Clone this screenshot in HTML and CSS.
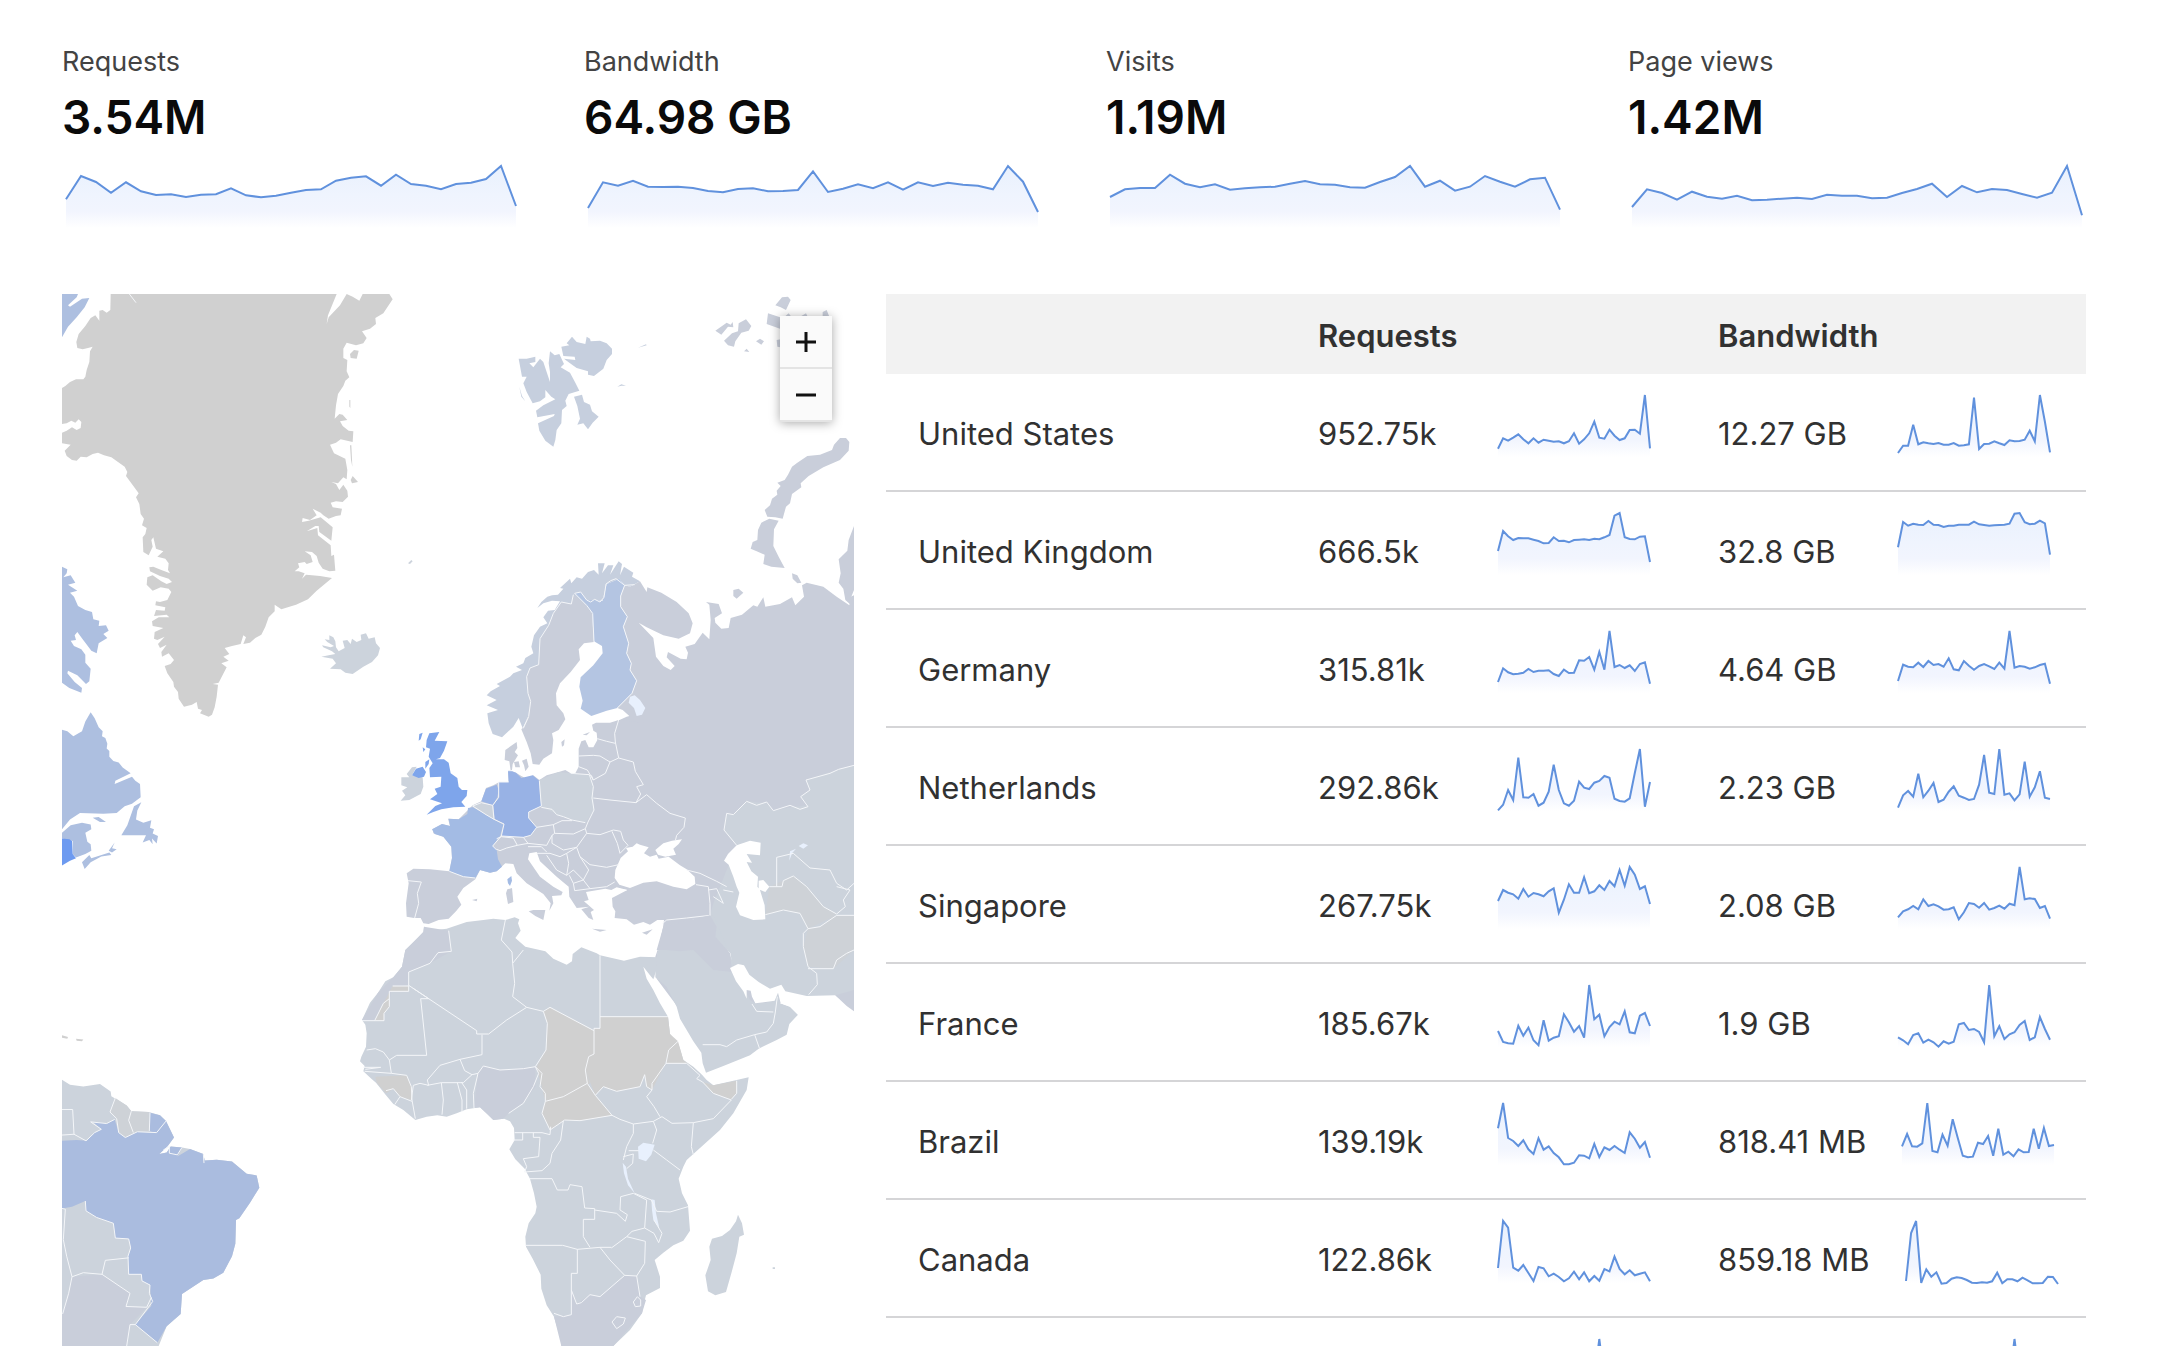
FILE: index.html
```
<!DOCTYPE html>
<html lang="en">
<head>
    <meta charset="UTF-8">
    <meta name="viewport" content="width=device-width, initial-scale=1.0">
    <title>Traffic</title>
    <link rel="stylesheet" href="styles.css">
</head>
<body>
    <main class="dashboard">
        <section class="metrics">
            <div class="metric">
                <h2>Requests</h2>
                <p>3.54M</p>
                <svg class="spark" data-points="100,30,48,80,49,76,87,85,93,86,85,67,88,94,89,80,72,70,44,35,31,59,26,54,59,70,54,50,39,0,120"></svg>
            </div>
            <div class="metric">
                <h2>Bandwidth</h2>
                <p>64.98 GB</p>
                <svg class="spark" data-points="126,49,59,44,62,63,62,66,75,79,69,67,76,75,72,16,78,68,55,67,49,71,49,60,50,56,59,70,0,47,138"></svg>
            </div>
            <div class="metric">
                <h2>Visits</h2>
                <p>1.19M</p>
                <svg class="spark" data-points="93,70,66,66,26,53,64,55,71,67,64,62,53,45,55,56,64,65,48,33,0,62,44,74,62,30,47,62,40,35,131"></svg>
            </div>
            <div class="metric">
                <h2>Page views</h2>
                <p>1.42M</p>
                <svg class="spark" data-points="123,70,81,101,77,92,98,89,103,101,98,95,99,86,89,89,97,95,81,69,53,93,60,79,69,72,84,95,80,0,148"></svg>
            </div>
        </section>

        <section class="traffic">
            <div class="map">
                <svg class="world" viewBox="0 0 2376 3156">
                    <!-- Greenland, Iceland, Arctic Canada -->
                    <g transform="translate(-36 -42)">
                        <path class="none" d="M182 42L181 90 170 98 158 90 148 92 148 122 136 106 122 114 106 138 86 162 79 186 82 204 98 208 114 204 128 200 120 214 118 246 110 270 106 290 100 298 78 298 60 306 46 318 36 324V432L50 430 64 422 76 428 86 418 94 426 92 444 80 450 66 442 50 452 36 458V490L62 494 44 512 50 528 66 540 80 542 92 530 110 532 128 522 144 518 162 526 184 532 204 546 224 560 232 576 228 588 244 610 266 640 258 652 268 672 272 702 282 716 276 736 290 744 286 762 278 772 280 816 296 826 308 800 304 780 310 772 318 806 340 814 322 830 346 836 356 850 354 870 360 880 334 870 310 860 298 862 300 874 330 888 356 896 366 906 350 912 334 904 308 886 292 892 290 914 308 932 332 922 356 926 364 936 352 960 330 966 318 964 316 976 346 982 344 992 318 990 312 1008 350 1004 358 1012 326 1012 306 1024 308 1038 340 1044 314 1056 312 1076 322 1080 344 1070 324 1092 330 1104 350 1094 334 1116 336 1130 356 1120 372 1140 362 1152 344 1158 352 1180 370 1206 372 1220 384 1236 386 1256 402 1280 426 1274 440 1266 444 1286 456 1290 450 1300 476 1310 486 1304 494 1282 500 1250 504 1214 488 1212 506 1208 530 1162 514 1150 536 1142 520 1130 538 1122 524 1104 546 1098 572 1092 580 1066 588 1072 580 1092 600 1088 616 1074 634 1064 646 1040 656 1012 674 994 674 974 694 988 738 974 774 958 800 932 846 894 810 888 786 886 768 884 756 896 764 880 746 874 734 874 748 862 744 850 764 846 770 852 788 846 782 826 764 814 786 816 800 828 806 848 818 866 838 874 856 872 852 824 844 828 842 796 804 766 802 744 770 754 796 738 806 738 808 756 844 782 848 742 812 712 776 722 756 726 758 714 780 720 800 706 788 686 812 698 820 706 836 716 858 708 872 706 876 686 848 682 842 668 858 664 878 666 894 650 892 632 880 614 868 630 858 612 844 606 864 610 880 592 890 598 892 570 886 536 852 520 840 494 858 488 872 478 908 486 910 454 896 452 878 438 870 424 892 420 878 404 868 402 854 416 858 376 864 342 880 318 886 302 898 292 890 274 892 240 880 234 880 206 890 188 918 196 940 190 950 174 936 154 960 146 978 132 976 114 1000 100 1028 58 1018 42H938L928 62 908 50 890 42 870 76 836 112 830 132 834 106 860 42Z"/>
                        <path class="none" d="M900 222L912 210 926 212 920 236 902 234ZM902 600L908 588 924 606 906 610ZM898 360l3 0v24l-3-4ZM900 496l4 0 3 64-4-20Z"/>
                        <path class="border" d="M238 42L258 68"/>
                        <path class="land" d="M814 1130L836 1126 856 1122 846 1114 820 1102 816 1096 842 1102 852 1098 832 1086 824 1078 838 1080 838 1066 850 1072 856 1084 858 1102 866 1114 884 1104 878 1082 892 1080 902 1092 906 1076 920 1086 934 1080 932 1064 948 1060 956 1076 974 1072 978 1090 990 1104 984 1126 966 1146 940 1160 908 1182 886 1178 872 1168 840 1166 858 1150 848 1136ZM1074 850l10-10 4 4-8 8Z"/>
                        <path class="canada" d="M36 42H84L80 52 54 76 60 80 96 56 118 54 104 82 80 112 54 140 36 172ZM36 860L52 868 50 880 40 892 62 886 76 908 54 914 82 932 60 938 72 950 84 978 106 990 126 996 130 1018 148 1022 146 1038 168 1036 176 1052 160 1062 172 1074 146 1090 140 1120 124 1112 106 1088 98 1078 82 1056 74 1066 78 1080 62 1082 72 1098 94 1108 106 1124 106 1148 122 1166 118 1204 108 1212 82 1186 54 1172 52 1180 74 1206 96 1224 94 1238 58 1224 36 1208Z"/>
                    </g>

                    <!-- Atlantic Canada and South America -->
                    <g transform="translate(-36 1218) scale(1 1.236)">
                        <path class="canada" d="M36 72L52 76 70 88 96 76 106 52 122 30 134 44 146 66 158 76 156 88 166 92 172 106 170 118 178 124 178 138 190 148 206 152 218 164 242 178 196 196 194 204 246 186 256 196 270 204 272 236 246 252 224 258 200 274 160 276 90 274 60 290 36 314ZM36 322L62 304 96 298 122 302 124 314 106 322 112 344 122 350 124 366 106 374 78 382 68 374 68 342 36 336ZM128 286L146 284 168 296 150 296ZM96 394L118 376 124 384 178 370 184 376 154 380 122 394 104 410ZM176 366L194 346 186 360 200 362 186 370ZM214 328L232 304 252 258 274 248 262 268 258 290 280 298 304 292 300 310 312 314 308 324 324 330 320 348 306 336 308 350 298 340 278 346 288 328Z"/>
                        <path class="usa" d="M36 336L58 338 66 342 68 374 78 384 60 390 36 402Z"/>
                        <path class="none" d="M36 814L54 818 52 822 36 820ZM78 822L100 824 96 828 80 827Z"/>
                        <path class="land" d="M36 922L60 934 100 938 150 932 182 950 184 962 230 984 244 998 296 1000 330 1008 348 1022 372 1062 356 1080 328 1102 350 1098 362 1084 396 1086 420 1090 460 1102 464 1118 500 1116 546 1120 590 1150 620 1154 628 1184 600 1220 568 1258 558 1262 556 1320 546 1350 520 1390 490 1404 460 1408 396 1442 392 1490 350 1520 326 1568H36Z"/>
                        <path class="cool" d="M66 1400L156 1394 240 1440 228 1474 290 1474 240 1516 230 1568H36V1490L56 1440Z"/>
                        <path class="sparse" d="M196 966L230 984 244 998 296 1000 298 1046 262 1048 226 1062 206 1050 200 1016 180 1000Z"/>
                        <path class="brazil" d="M36 1070L80 1068 110 1070 134 1050 154 1042 130 1024 170 1028 194 1018 206 1050 226 1062 262 1048 310 1050 298 1046 300 1002 330 1008 348 1022 372 1062 352 1084 328 1102 350 1098 362 1084 396 1086 382 1108 420 1090 460 1102 464 1118 500 1116 546 1120 590 1150 620 1154 628 1184 600 1220 568 1258 558 1262 556 1320 546 1350 520 1390 490 1404 460 1408 396 1442 392 1490 350 1520 322 1560 256 1516 304 1470 300 1420 276 1410 274 1394 236 1394 234 1350 242 1330 236 1308 196 1306 190 1270 140 1256 108 1240 106 1216 66 1230 36 1234Z"/>
                        <path class="border" d="M36 1234L46 1236 40 1310 50 1350 66 1400 100 1390 156 1394 166 1360 236 1354M66 1400L56 1440 38 1490M156 1394L240 1440 228 1472 290 1474 304 1450M240 1516L230 1568M240 1516L256 1516M36 994H68L72 1054 36 1056M72 1054L108 1070 134 1050 154 1042 122 1024 170 1028 194 1018M196 966L180 1000 200 1016 206 1050 226 1062 262 1048 320 1050 348 1022M244 998L236 1020 250 1050M300 1002L298 1046M106 1216L108 1240 140 1256 190 1270 196 1306 236 1308 242 1330 234 1350 236 1394 274 1394 276 1410 300 1420 298 1440 308 1460 256 1516 322 1560M340 1092L358 1084 358 1100 382 1104 396 1086M460 1102l2 22"/>
                    </g>

                    <!-- Arctic islands, Scandinavia, Russia -->
                    <g transform="translate(1194 -42)">
                        <path class="north" d="M176 236L200 236 226 230 226 246 208 250 220 262 240 236 250 246 270 306 270 276 266 250 270 214 284 226 298 222 312 252 302 262 330 278 346 308 358 332 326 342 316 362 320 378 306 390 304 430 290 450 286 480 280 500 256 482 238 452 234 430 282 408 284 402 232 412 228 392 250 376 286 358 274 350 256 330 256 352 240 364 218 370 200 336 190 310 200 290 186 290ZM304 200L328 196 320 190 336 170 350 186 376 192 380 170 390 176 392 184 420 182 440 190 456 206 456 222 440 240 430 266 402 288 384 284 384 274 350 264 330 250 312 236 346 240 344 230 310 228ZM342 350L366 344 372 366 390 374 396 394 416 410 398 428 384 448 370 430 352 434 360 416 352 378ZM534 203L558 193 560 196ZM472 320l12-7 14 4-14 0ZM178 320l8 28 10 16-12-14Z"/>
                        <path class="cool" d="M946 76L966 52 984 50 992 60 978 90 962 82ZM766 152L800 128 812 134 818 126 820 142 804 140 784 164ZM792 182L816 160 834 154 836 130 858 118 874 138 866 152 844 158 826 184 822 200 804 196ZM924 100L960 112 960 146 920 132ZM888 184L900 176 912 184 904 194ZM852 214L860 206 868 216ZM1088 96L1100 90 1108 110 1088 110ZM974 110l12-10 8 10ZM1024 108l14-8 4 8ZM950 180L962 178V202L952 200Z"/>
                        <path class="cool" d="M1168 486L1158 474 1140 474 1122 494 1116 510 1080 524 1042 528 1012 548 996 560 984 584 974 600 952 608 962 618 950 632 952 644 936 656 930 676 914 690 922 710 946 712 968 716 978 680 990 670 996 642 1024 622 1022 610 1046 588 1090 562 1140 540 1166 512ZM904 728L928 716 956 722 942 748 940 798 956 830 974 864 934 860 910 852 914 824 890 814 872 806 878 786 892 780 894 750ZM996 880L1012 886 1024 908 1012 910 998 896ZM820 930L836 926 850 938 830 956 820 948ZM1182 738L1166 780 1162 812 1136 838 1142 880 1136 908 1150 926 1156 960 1172 974 1174 950 1182 930Z"/>
                        <path class="cool" d="M494 916L510 920 540 904 560 936 562 922 604 938 650 966 686 1000 698 1030 690 1060 656 1076 610 1066 560 1042 536 1028 580 1074 588 1130 610 1158 632 1170 644 1158 620 1132 624 1116 662 1136 680 1138 684 1118 676 1100 704 1092 728 1058 748 1078 752 1020 748 974 738 966 776 972 786 1000 764 1014 766 1028 784 1046 806 1044 812 1014 846 1004 880 976 892 980 910 952 916 980 960 972 996 952 1006 976 1032 950 1026 916 1040 908 1090 920 1130 950 1168 976 1172 950 1182 946V1800H660L560 1760 480 1500 470 1324 500 1310 508 1308 488 1290 472 1284 516 1240 530 1202 510 1170 514 1150 500 1120 506 1090 490 1040 502 1010 482 980 482 948Z"/>
                        <path class="north" d="M188 1345L176 1314 160 1340 126 1372 98 1362 86 1330 82 1300 114 1290 80 1276 110 1260 80 1246 92 1234 120 1218 110 1212 150 1190 160 1180 186 1170 168 1160 190 1150 196 1134 220 1120 214 1100 222 1066 240 1040 262 1030 250 1012 264 992 284 990 300 964 276 962 250 970 232 984 244 966 262 950 276 946 294 944 310 926 300 924 330 896 334 910 350 892 366 896 384 876 402 870 416 884 414 850 434 850 426 880 444 856 460 856 450 884 476 844 486 852 480 886 492 860 520 878 516 890 540 904 510 920 494 916 478 896 440 912 428 960 404 964 380 1000 300 1010 266 1076 240 1164 212 1264 204 1310Z"/>
                        <path class="cool" d="M340 944L380 976 396 1000 402 1086 372 1090 356 1108 360 1140 332 1176 300 1210 288 1240 290 1276 310 1300 316 1318 296 1350 276 1360 280 1380 276 1420 250 1436 238 1454 218 1452 212 1420 200 1386 184 1348 192 1340 204 1310 208 1264 200 1190 210 1164 236 1154 240 1076 266 1036 280 1000 304 966 334 972Z"/>
                        <path class="finland" d="M344 940L362 936 380 960 404 960 428 962 440 912 478 896 494 916 482 948 482 980 502 1010 490 1040 506 1090 500 1120 514 1150 510 1170 530 1202 516 1240 472 1284 440 1292 394 1308 362 1286 368 1262 358 1220 362 1192 400 1156 428 1120 426 1098 402 1084 396 1000 374 970Z"/>
                        <path class="lake" d="M510 1250L524 1246 540 1260 556 1284 546 1304 530 1308 522 1284 506 1268Z"/>
                        <path class="border" d="M344 940L362 936 380 960 392 966 404 958 420 966 432 952 438 912 452 902 468 896 494 916 482 948 482 980 502 1010 490 1040 506 1090 500 1120 514 1150 510 1170 530 1202 516 1240 472 1284M494 916L524 914M344 940L380 976 398 1000 402 1086M340 944L334 972 304 966 280 1000 266 1036 240 1076 236 1154 210 1164 200 1190 204 1240 212 1264 206 1310 190 1345"/>
                    </g>

                    <!-- Europe, Near East, Central Asia -->
                    <g transform="translate(954 1188)">
                        <path class="cool" d="M716 90L690 98 648 98 636 104 640 122 650 128 652 150 640 172 626 172 616 150 604 154 596 176 596 230 586 250 572 250 556 240 536 246 500 256 478 270 460 256 440 266 424 258 408 248 392 242 388 214 374 210 376 180 410 156 412 174 404 186 414 196 398 222 396 240 384 242 386 276 358 276 340 286 318 294 304 334 278 346 264 360 236 388 204 386 210 408 186 402 158 418 160 430 190 440 214 470 216 504 208 544 150 538 100 536 80 550 86 580 78 640 80 680 102 684 122 684 130 700 146 702 176 690 206 686 228 664 244 644 232 620 250 594 286 568 300 540 330 548 350 544 376 520 400 522 410 550 440 580 490 612 512 640 508 662 520 640 516 618 544 616 548 606 520 590 480 560 444 508 448 490 470 486 480 514 530 560 566 590 568 620 590 654 628 650 604 658 626 684 640 690 632 666 642 660 612 634 626 630 618 606 640 602 676 596 694 600 710 592 742 600 696 624 698 650 706 664 704 684 740 688 762 704 790 696 810 704 832 690 852 690 848 720 836 770 826 800 830 866 900 960H1100L1200 940 1280 918 1368 918 1400 940 1422 960V100H800Z"/>
                        <path class="land" d="M1422 226L1376 238 1278 270 1290 300 1262 320 1284 346 1230 352 1180 362 1160 340 1100 334 1060 374 1040 370 1032 420 1070 466 1000 640 990 676 1010 710 1006 740 1050 790 1056 830 1200 920 1368 918 1422 960ZM572 250L628 254 640 290 642 360 616 398 550 380 484 352 478 270 536 246Z"/>
                        <path class="sparse" d="M1156 674L1210 660 1260 670 1284 716 1320 710 1370 672 1330 650 1280 590 1240 558 1168 590ZM1284 716L1370 676 1422 676V780L1360 836 1284 830 1270 770Z"/>
                        <path class="land" d="M64 262L88 262 80 252 96 232 110 230 96 256 128 262 130 290 122 312 88 330 62 332 76 316 66 302 82 292 64 286Z"/>
                        <path class="uk" d="M148 130L178 126 164 152 202 154 192 182 180 204 168 208 192 208 206 218 212 250 232 264 236 290 246 300 262 300 260 318 244 336 256 350 220 352 184 358 160 366 140 374 166 348 186 340 150 328 172 312 164 296 182 290 184 260 150 262 148 234 158 220 146 200 150 176 138 172 140 150ZM116 152L118 132 128 128 122 148ZM128 172l8 6-6 8ZM136 216l12-8-2 14-10 14ZM96 256L108 236 128 230 138 246 132 260 116 264Z"/>
                        <path class="france" d="M278 352L264 354 262 372 236 388 206 386 210 408 186 402 156 418 164 432 190 440 214 470 216 504 208 544 250 560 286 564 300 540 330 548 350 544 366 530 354 508 350 480 338 468 360 438 370 404 340 388 326 376 304 366ZM394 558L396 572 390 588 384 580 382 568Z"/>
                        <path class="germany" d="M384 242L392 242 408 248 424 264 458 256 478 272 480 320 484 348 446 366 446 384 470 412 452 436 430 442 364 438 372 402 344 386 340 346 356 322 356 276 386 276Z"/>
                        <path class="netherlands" d="M304 334L318 296 350 284 356 300 352 322 338 346 322 340Z"/>
                        <path class="land" d="M278 348L304 338 338 350 342 388 318 374Z"/>
                        <path class="cool" d="M446 664L460 660 496 660 490 690 466 678ZM382 598L396 594 400 636 384 642 378 610ZM636 716L680 720 660 725ZM786 728L818 718 800 734ZM426 212L440 206 446 230 436 244 432 226ZM402 216l14-2 4 18-14 0ZM544 156L554 148 552 166 546 170ZM608 134L630 126 620 136ZM276 630l16-4-2 8Z"/>
                        <path class="sea" d="M706 540L722 504 744 484 738 474 758 470 770 460 780 464 806 472 792 490 810 500 830 494 836 506 866 500 900 526 920 538 944 560 946 582 920 598 880 590 830 574 790 578 750 594 718 584 704 564ZM826 480L850 460 876 452 906 448 896 462 880 476 888 494 856 500 834 494ZM700 604L720 596 742 600 716 608ZM1070 466L1110 452 1142 458 1140 496 1100 492 1116 518 1100 516 1114 544 1134 560 1132 590 1140 600 1154 646 1156 688 1120 690 1080 676 1068 650 1078 608 1070 590 1060 560 1046 524 1032 512 1044 492ZM1136 572L1150 570 1168 590 1156 606 1136 598Z"/>
                        <path class="lake" d="M1228 512L1230 484 1248 476 1236 490ZM1256 468L1270 460 1284 466 1270 476Z"/>
                        <path class="border" d="M716 90L704 130 706 156 716 204M652 146L680 154 706 160M596 198L640 196 660 198 690 216 716 204 760 216 766 244 790 284 770 290 782 312 768 338 690 330 640 324M690 216L676 250 640 270 622 240 596 230M640 270L634 256M572 250L628 254 640 290 636 324 642 360 624 396 616 416M384 242H396M386 276L356 276 356 322 338 346 304 338 278 348 318 374 342 388 372 402 364 438 338 468 350 480M478 272L484 348 446 366 446 384 470 412 452 436 430 442 364 438M338 346L342 388M484 352L516 358 530 374 550 380 576 390 616 398M470 412L520 404 546 392 576 392M520 404L524 430 580 432 616 416M430 442L444 460 500 466 516 436 524 430M516 436L516 460 550 480 590 472 620 430 616 416M768 338L800 314 830 340 870 370 916 384 912 412 890 436 886 452M620 430L660 434 700 420 722 424 730 450 744 466 720 490 712 460 696 424M590 472L600 500 630 524 680 532 716 524M600 500L626 540 610 570 630 596 680 590 704 576M470 490L510 490 540 500 560 490 590 472M500 496L530 540 560 556 566 520 560 490M560 556L580 540 610 570 580 580 568 556M580 580L584 602 630 596M350 446L364 440 400 444 412 466 380 474 360 482 350 478M412 466L444 460M444 470L484 470 500 486M84 572L124 576 112 610 116 640 104 684M208 544L250 560 286 564M920 540L960 550 1010 574 1040 590M948 584L985 590 990 640 990 676M985 600L1010 596 1030 640 1000 620M1030 600L1060 606M848 700L860 690 920 684 990 676 1010 710 1006 740 1050 790 1056 830M940 688L930 730 836 780M900 760L900 784 870 790 880 812 836 846 822 846M900 784L940 780 1000 840 1056 846M836 780L832 820 824 862M1070 466L1032 420 1040 370 1060 374 1100 334 1130 346 1160 336 1180 362 1230 346 1260 358 1284 350 1262 320 1290 300 1278 270 1350 250 1376 238 1422 226M1190 590V502L1240 490 1290 534 1350 540 1370 580 1400 600 1422 580M1168 590H1206L1210 572 1240 558 1280 590 1330 650 1370 672M1370 590L1410 600 1390 630 1396 650 1370 672M1156 674L1210 660 1260 670 1284 716 1320 710 1370 676 1422 676M1284 716L1270 730 1270 770 1284 830 1310 850 1312 884 1286 914M1284 836L1360 836 1370 810 1400 790 1422 780"/>
                    </g>

                    <!-- Africa, Arabia -->
                    <g transform="translate(864 1818)">
                        <path class="land" d="M222 80L220 96 196 122 166 150 156 200 130 232 106 244 84 278 60 308 36 360 46 374 50 400 48 440 34 470 30 484 44 498 40 514 64 536 78 548 108 586 130 612 160 630 196 660 230 650 262 646 290 650 320 640 350 628 390 622 412 642 430 660 462 656 480 664 492 684 494 720 478 748 496 778 524 806 540 836 552 880 560 920 556 940 536 970 526 1010 528 1040 548 1076 572 1124 574 1166 590 1216 612 1250 624 1290 636 1310 634 1338H790L840 1290 876 1240 882 1210 888 1186 930 1164 930 1130 914 1080 940 1058 970 1036 1000 1022 1020 992 1014 916 996 880 986 836 1000 800 1010 780 1050 744 1110 690 1150 640 1190 570 1196 532 1150 542 1090 556 1070 540 1056 524 1030 500 1000 480 988 440 960 402 954 350 930 310 910 270 890 236 880 200 900 226 910 238 918 214 926 172 870 170 822 182 750 166 740 160 694 142 668 162 666 184 650 194 610 176 586 154 526 140 496 114 512 92 504 70 508 58 494 52 466 60 430 56 400 60 350 66 290 86 240 92Z"/>
                        <path class="land" d="M920 172L940 80 1090 46 1150 190 1150 220 1170 240 1200 300 1216 310 1250 308 1284 276 1290 310 1320 320 1344 344 1318 372 1310 404 1280 420 1226 446 1200 466 1120 498 1068 518 1058 490 1054 458 1030 424 990 356 980 320 950 260 916 232Z"/>
                        <path class="cool" d="M920 150L940 80 1080 46 1100 80 1096 110 1140 160 1146 216 1090 210 1030 150 988 154 950 150ZM222 80L220 96 166 150 156 200 130 232 84 278 36 360H74L120 300 124 262 176 256 176 216 240 190 304 154 296 92ZM664 1244L664 1170 680 1212 720 1184 750 1190 824 1126 860 1128 870 1190 888 1200 876 1240 790 1338H634L612 1250ZM384 520L400 498 450 510 556 500 556 560 520 610 476 640 460 656 430 660 390 622 372 624Z"/>
                        <path class="none" d="M580 334L600 322 732 392 732 462 716 470 706 510 720 550 640 590 586 604 560 500 588 450 592 370ZM586 604L640 590 712 550 736 586 786 646 690 662 644 660 600 690 576 640ZM750 350H954L960 402 984 424 956 450 946 490 906 570 890 560 884 524 870 560 800 574 760 560 736 586 706 510 716 470 732 462 732 385 750 385ZM984 424L1000 480 1056 524 1010 490 948 490 956 450ZM1058 546L1090 556 1160 542V580L1144 598 1090 580ZM76 530L170 526 184 560 184 600 150 590 130 566 108 580 80 548ZM128 258H176V274H118V320L102 340V362H74L100 310Z"/>
                        <path class="land" d="M1164 944L1176 970 1182 1004 1168 1010 1160 1060 1144 1120 1128 1176 1096 1186 1074 1174 1066 1126 1082 1080 1078 1040 1086 1016 1116 1008 1140 990 1158 964ZM1268 1102h7v5h-7ZM1510 346l-8-4 10-4Z"/>
                        <path class="sea" d="M1140 204L1164 192 1182 196 1198 224 1226 246 1260 266 1294 254 1306 274 1370 288 1456 286 1482 314 1512 332V420L1344 344 1320 320 1292 310 1284 278 1274 302 1216 310 1206 290 1202 272 1190 270 1190 296 1180 274 1158 244Z"/>
                        <path class="cool" d="M1456 286L1512 270V334L1490 318Z"/>
                        <path class="lake" d="M864 740L880 728 914 734 904 764 888 784 866 776ZM818 788L828 800 834 836 854 880 834 856 822 820ZM904 898L914 900 918 940 928 984 910 960 906 930Z"/>
                        <path class="border" d="M296 92L304 154 264 158 240 190 176 216V256L380 392V402H416L470 360 530 322 580 334M176 256V274H118V320L102 340V362H36M74 362L100 310 118 296M128 258H176M188 264L236 296H212L230 466H140L118 480M50 450L76 446 100 456 118 480 124 520M396 404V464L330 478 270 496 232 540 236 556 210 550 190 556 184 600M466 60L454 120 486 156 488 190 520 150M488 190L494 250 488 290 530 322M580 334L600 322 732 392V385H750V166M750 350H954M580 334L592 370 588 450 556 500M732 392V462L716 470 706 510 712 550 736 586M330 478L344 512 366 524 384 520 400 498 450 510 520 506 556 500 576 520 570 560 586 580V604M556 500L566 520 550 560 520 610 476 640M384 520L370 580 372 624M334 546L350 570 350 626M322 548L336 600 336 636M274 548L280 600 276 644M232 556L274 548H340L366 524M184 560L186 600 196 656M124 520L170 526 184 560M108 572L130 566 150 590 134 614M150 590L186 604M44 514L124 520M40 502H92L46 508M586 604L640 590 712 550M736 586L786 646 690 662 644 660 600 690 576 640 586 604M786 646L810 658 850 672M494 698H576L600 704 602 680M518 698V720H490M550 698V712H570L566 770 520 776 530 800 524 816 576 812 600 790 606 760 632 720 640 662M540 836H606L622 870H654L660 854 696 860 704 924 734 926V958H700V1010L720 1042M526 1036H638L682 1048 750 1042H784M682 1048V1120H664V1244L640 1250 612 1240M664 1170L680 1212 694 1208 720 1184 750 1190 824 1126 780 1080 750 1042M784 1044L830 1010 886 1024 884 1090 860 1128 824 1126M860 1128L870 1190M830 1010L846 994 884 984 890 900 850 880 812 890 810 930 832 944 826 964 800 940 734 930M854 880L904 900 920 934 960 936 1014 920M912 960L936 1000 926 1028 912 1000 884 984M850 672V700L830 740 820 780M850 672L910 664 920 690 908 730M836 752H866M820 770L850 762 848 790 830 806M910 750L950 780 990 810M910 664L936 650 966 670 1030 668 1024 740 1030 764M1030 668L1090 656 1144 600 1090 580 1058 546 1040 536 1050 526 1010 490 948 490 956 450 984 424M948 490L906 550V570L890 590 912 620 930 650M736 586L760 560 800 574 870 560 884 524 890 560 906 570M1144 598L1160 580V542M1058 434H1110L1130 440 1160 420 1214 404 1250 396 1270 370 1276 336 1282 290M1214 404L1228 444M1206 312L1220 334 1270 336M786 1266L800 1250 826 1254 820 1272 800 1286ZM850 1206L862 1190 872 1200 872 1218 856 1220Z"/>
                    </g>
                </svg>
                <div class="zoom">
                    <button type="button" aria-label="Zoom in">
                        <svg width="20" height="20" viewBox="0 0 20 20"><path d="M0 10H20M10 0V20"/></svg>
                    </button>
                    <button type="button" aria-label="Zoom out">
                        <svg width="20" height="20" viewBox="0 0 20 20"><path d="M0 10H20"/></svg>
                    </button>
                </div>
            </div>

            <table class="countries">
                <thead>
                    <tr><td></td><th scope="col">Requests</th><th scope="col">Bandwidth</th></tr>
                </thead>
                <tbody>
                    <tr>
                        <th scope="row">United States</th>
                        <td><div class="cell"><span>952.75k</span><svg class="spark" data-points="161,130,137,128,118,133,145,130,143,134,137,140,139,145,139,115,146,133,115,80,128,131,104,122,135,130,105,104,116,0,160"></svg></div></td>
                        <td><div class="cell"><span>12.27 GB</span><svg class="spark" data-points="174,152,152,89,148,142,145,147,144,149,149,144,152,151,148,8,162,147,146,139,145,150,136,139,138,134,107,139,0,80,172"></svg></div></td>
                    </tr>
                    <tr>
                        <th scope="row">United Kingdom</th>
                        <td><div class="cell"><span>666.5k</span><svg class="spark" data-points="114,54,70,81,75,76,76,80,84,91,90,73,84,83,88,81,80,79,81,77,79,73,66,8,0,73,78,79,71,70,147"></svg></div></td>
                        <td><div class="cell"><span>32.8 GB</span><svg class="spark" data-points="103,27,38,32,35,36,24,35,36,42,38,38,35,35,35,26,34,36,38,37,36,35,32,2,0,28,34,32,23,31,125"></svg></div></td>
                    </tr>
                    <tr>
                        <th scope="row">Germany</th>
                        <td><div class="cell"><span>315.81k</span><svg class="spark" data-points="153,112,124,130,128,125,114,123,119,119,118,129,135,116,126,125,88,89,78,116,63,116,0,108,102,111,103,120,99,94,158"></svg></div></td>
                        <td><div class="cell"><span>4.64 GB</span><svg class="spark" data-points="150,101,107,109,95,108,90,102,99,107,82,115,118,90,104,116,105,99,106,114,95,113,0,110,105,107,113,109,102,98,158"></svg></div></td>
                    </tr>
                    <tr>
                        <th scope="row">Netherlands</th>
                        <td><div class="cell"><span>292.86k</span><svg class="spark" data-points="184,167,123,153,26,145,146,135,170,161,128,47,123,163,170,155,98,116,120,101,96,81,86,149,156,158,148,72,0,173,99"></svg></div></td>
                        <td><div class="cell"><span>2.23 GB</span><svg class="spark" data-points="176,139,126,143,74,145,125,102,159,152,128,112,140,146,153,150,107,18,131,135,0,137,133,154,136,38,143,115,67,146,150"></svg></div></td>
                    </tr>
                    <tr>
                        <th scope="row">Singapore</th>
                        <td><div class="cell"><span>267.75k</span><svg class="spark" data-points="102,69,77,82,95,66,89,78,82,88,73,64,137,98,52,77,77,31,79,73,55,69,42,58,9,56,0,23,66,58,111"></svg></div></td>
                        <td><div class="cell"><span>2.08 GB</span><svg class="spark" data-points="151,133,127,117,127,97,117,112,118,128,127,121,157,136,108,111,122,108,128,123,116,125,110,115,0,97,94,96,123,117,155"></svg></div></td>
                    </tr>
                    <tr>
                        <th scope="row">France</th>
                        <td><div class="cell"><span>185.67k</span><svg class="spark" data-points="138,171,175,176,122,152,128,166,181,106,167,158,154,88,112,140,123,158,0,103,89,154,126,110,118,79,142,145,92,84,123"></svg></div></td>
                        <td><div class="cell"><span>1.9 GB</span><svg class="spark" data-points="157,166,178,150,145,173,164,172,185,169,176,170,118,114,135,132,141,172,0,154,124,162,148,142,120,108,165,157,96,132,164"></svg></div></td>
                    </tr>
                    <tr>
                        <th scope="row">Brazil</th>
                        <td><div class="cell"><span>139.19k</span><svg class="spark" data-points="76,0,105,114,129,112,139,153,106,140,130,150,163,184,184,179,157,158,166,123,162,133,141,129,140,150,88,107,134,117,164"></svg></div></td>
                        <td><div class="cell"><span>818.41 MB</span><svg class="spark" data-points="130,93,130,131,121,0,144,148,95,128,49,104,158,163,161,119,123,99,158,77,155,146,160,139,148,147,77,137,75,129,126"></svg></div></td>
                    </tr>
                    <tr>
                        <th scope="row">Canada</th>
                        <td><div class="cell"><span>122.86k</span><svg class="spark" data-points="141,0,20,140,149,132,156,180,138,142,166,158,168,181,172,152,175,154,181,165,179,144,151,107,144,160,148,163,158,154,181"></svg></div></td>
                        <td><div class="cell"><span>859.18 MB</span><svg class="spark" data-points="180,36,0,186,145,167,154,188,186,173,169,171,177,185,186,184,185,181,155,187,175,175,181,170,178,187,187,186,167,168,189"></svg></div></td>
                    </tr>
                    <tr>
                        <th scope="row"></th>
                        <td><div class="cell"><span></span><svg class="spark" data-points="150,140,145,138,142,150,146,140,138,144,150,146,142,140,136,144,148,140,130,120,0,120,136,140,144,138,142,146,150,140,160"></svg></div></td>
                        <td><div class="cell"><span></span><svg class="spark" data-points="150,140,145,138,142,150,146,140,138,144,150,146,142,140,136,144,148,140,130,136,140,132,120,0,120,138,142,146,150,140,160"></svg></div></td>
                    </tr>
                </tbody>
            </table>
        </section>
    </main>

    <svg class="defs" aria-hidden="true">
        <defs>
            <linearGradient id="sparkFill" gradientUnits="userSpaceOnUse" x1="0" y1="0" x2="0" y2="66">
                <stop offset="0" stop-color="#e8f0fd"/>
                <stop offset=".5" stop-color="#eff4fe"/>
                <stop offset=".75" stop-color="#f2f5fe"/>
                <stop offset="1" stop-color="#fff"/>
            </linearGradient>
        </defs>
    </svg>

    <script>
        // points are distances below the peak, three units to a pixel
        function drawSpark(svg) {
            const pad = 4;
            const points = svg.dataset.points.split(',').map(Number);
            const step = (svg.clientWidth - pad * 2) / (points.length - 1);
            const line = points.map(function(p, i) {
                return (pad + i * step).toFixed(1) + ' ' + (pad + p / 3).toFixed(1);
            }).join('L');
            const end = (svg.clientWidth - pad).toFixed(1);

            svg.innerHTML =
                '<path class="spark-area" d="M' + line + 'L' + end + ' 66L' + pad + ' 66Z"/>' +
                '<path class="spark-line" d="M' + line + '"/>';
        }

        function drawAll() {
            document.querySelectorAll('.spark').forEach(drawSpark);
        }

        drawAll();
        window.addEventListener('resize', drawAll);
    </script>
</body>
</html>
```

FILE: styles.css
```
* {
    margin: 0;
    padding: 0;
    box-sizing: border-box;
}

body {
    background-color: #ffffff;
    color: #313131;
    font-family: Inter, "Liberation Sans", sans-serif;
}

.dashboard {
    height: 100vh;
    overflow: hidden;
    padding: 44px 84px 0 62px;
}

.metrics {
    display: grid;
    grid-template-columns: repeat(4, 1fr);
    gap: 64px;
    margin-bottom: 46px;
}

.metric h2 {
    color: #434343;
    font-size: 27px;
    font-weight: 400;
    line-height: 36px;
    margin-bottom: 8px;
}

.metric p {
    color: #0a0a0a;
    font-size: 46px;
    font-weight: 600;
    line-height: 58px;
    margin-bottom: 16px;
}

.spark {
    display: block;
    width: 100%;
    height: 86px;
}

.spark-line {
    fill: none;
    stroke: #6091dd;
    stroke-width: 2;
}

.spark-area {
    fill: url(#sparkFill);
}

.defs {
    position: absolute;
    width: 0;
    height: 0;
}

.traffic {
    display: grid;
    grid-template-columns: 33fr 50fr;
    gap: 32px;
    align-items: start;
}

/* map */
.map {
    position: relative;
    overflow: hidden;
}

.world {
    display: block;
    width: 100%;
}

.none {
    fill: #d0d0d0;
}

.sparse {
    fill: #ced2d7;
}

.land {
    fill: #ccd3dc;
}

.cool {
    fill: #c9ceda;
}

.north {
    fill: #c6cfde;
}

.canada {
    fill: #adbfe0;
}

.brazil {
    fill: #aabcdf;
}

.usa {
    fill: #6d9af0;
}

.uk {
    fill: #7ea5eb;
}

.france {
    fill: #a3bbe4;
}

.germany {
    fill: #98b2e5;
}

.netherlands {
    fill: #9ab4e6;
}

.finland {
    fill: #b4c5e2;
}

.lake {
    fill: #e8f0fd;
}

.sea {
    fill: #ffffff;
}

.border {
    fill: none;
    stroke: #f4f6f9;
    stroke-width: 1px;
    stroke-linejoin: round;
    vector-effect: non-scaling-stroke;
}

.zoom {
    position: absolute;
    top: 22px;
    right: 22px;
    width: 52px;
    box-shadow: 0 1px 10px rgba(0, 0, 0, 0.35);
}

.zoom button {
    display: flex;
    align-items: center;
    justify-content: center;
    width: 100%;
    height: 53px;
    border: none;
    border-bottom: 2px solid #e4e4e4;
    background-color: #fafafa;
    cursor: pointer;
}

.zoom path {
    stroke: #111111;
    stroke-width: 3;
}

/* table */
.countries {
    width: 100%;
    table-layout: fixed;
    border-collapse: separate;
    border-spacing: 0;
    font-size: 31px;
    line-height: 40px;
    text-align: left;
}

.countries th,
.countries td {
    padding: 3px 32px 0;
    white-space: nowrap;
}

.countries thead tr {
    height: 80px;
    background-color: #f2f2f2;
}

.countries thead th {
    font-weight: 600;
}

.countries tbody tr {
    height: 118px;
}

.countries tbody th,
.countries tbody td {
    border-bottom: 2px solid #d5d5d7;
    font-weight: 400;
}

.cell {
    display: flex;
    align-items: center;
    gap: 32px;
}

.cell span {
    flex: none;
    min-width: 144px;
}

.cell .spark {
    flex: none;
    width: 160px;
}
```
